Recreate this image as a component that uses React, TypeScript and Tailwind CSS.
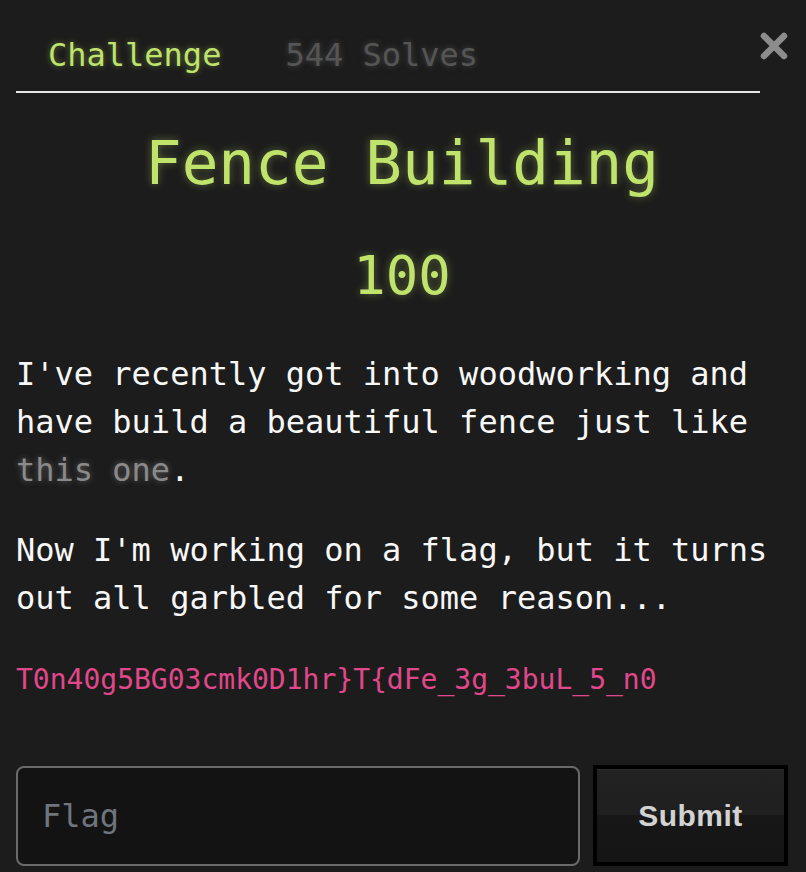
import { useState } from 'react';

const mono = "font-['DejaVu_Sans_Mono','Liberation_Mono',monospace]";
const garbled = 'T0n40g5BG03cmk0D1hr}T{dFe_3g_3buL_5_n0';

export default function App() {
  const [flag, setFlag] = useState('');
  const [tab, setTab] = useState<'challenge' | 'solves'>('challenge');

  return (
    <div className={`min-h-[872px] w-full bg-[#1c1c1c] pl-4 pr-[18px] ${mono}`}>
      <div className="flex items-start">
        <nav className="flex flex-1 border-b-2 border-[#e6e6e6] pt-[19px]">
          <button
            onClick={() => setTab('challenge')}
            className={`px-8 py-3 text-[32px] leading-[48px] ${
              tab === 'challenge'
                ? 'text-[#bfe36b] [text-shadow:0_0_6px_rgba(191,227,107,0.45)]'
                : 'text-[#555] [text-shadow:0_0_6px_rgba(120,120,120,0.5)]'
            }`}
          >
            Challenge
          </button>
          <button
            onClick={() => setTab('solves')}
            className={`px-8 py-3 text-[32px] leading-[48px] ${
              tab === 'solves'
                ? 'text-[#bfe36b] [text-shadow:0_0_6px_rgba(191,227,107,0.45)]'
                : 'text-[#555] [text-shadow:0_0_6px_rgba(120,120,120,0.5)]'
            }`}
          >
            544 Solves
          </button>
        </nav>
        <button className="mt-[32px] h-[28px] w-[28px]" title="Close">
          <svg viewBox="0 0 28 28" className="h-[28px] w-[28px]">
            <path d="M4 4 L24 24 M24 4 L4 24" stroke="#8c8c8c" strokeWidth="6.5" strokeLinecap="round" />
          </svg>
        </button>
      </div>

      <h1 className="mt-[34px] text-center text-[61px] leading-[72px] text-[#bfe36b] [text-shadow:0_0_8px_rgba(191,227,107,0.4)]">
        Fence Building
      </h1>
      <h2 className="mt-[44px] text-center text-[54px] leading-[65px] text-[#bfe36b] [text-shadow:0_0_8px_rgba(191,227,107,0.4)]">
        100
      </h2>

      <div className="mt-[42px] text-[32px] leading-[48px] text-[#f7f7f7]">
        <p className="mb-8">
          I've recently got into woodworking and have build a beautiful fence just like{' '}
          <a href="#" className="text-[#8a8a8a] [text-shadow:0_0_6px_rgba(150,150,150,0.55)]">
            this one
          </a>
          .
        </p>
        <p className="mb-8">Now I'm working on a flag, but it turns out all garbled for some reason...</p>
        <p>
          <code className={`text-[28px] text-[#e0488b] ${mono}`}>{garbled}</code>
        </p>
      </div>

      <form
        className="mt-[62px] flex gap-[13px]"
        onSubmit={(e) => {
          e.preventDefault();
        }}
      >
        <input
          value={flag}
          onChange={(e) => setFlag(e.target.value)}
          placeholder="Flag"
          className={`h-[100px] flex-1 rounded-[8px] border-2 border-[#6a6a6a] bg-[#131313] pl-[24px] text-[32px] text-[#ddd] outline-none placeholder:text-[#6e757c] ${mono}`}
        />
        <button
          type="submit"
          className="h-[101px] w-[195px] -mt-px border-4 border-black bg-[linear-gradient(to_bottom,#222222_0%,#1f1f1f_50%,#171717_50%,#151515_100%)] font-['Liberation_Sans',Arial,sans-serif] text-[30px] font-bold tracking-[0.5px] text-[#d2d2d2] shadow-[inset_0_1px_0_#2c2c2c]"
        >
          Submit
        </button>
      </form>
    </div>
  );
}
